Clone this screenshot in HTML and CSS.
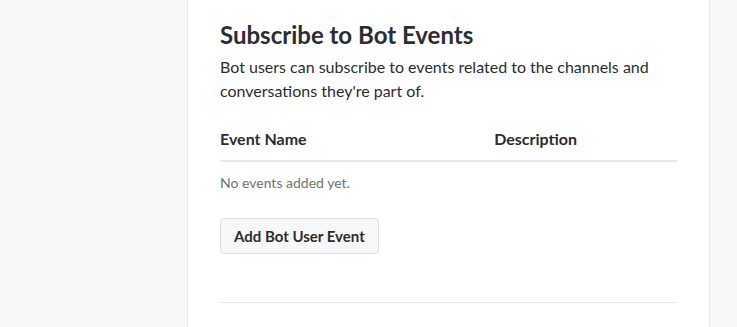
FILE: index.html
```html
<!DOCTYPE html>
<html lang="en">
<head>
    <meta charset="UTF-8">
    <title>Subscribe to Bot Events</title>
    <link rel="stylesheet" href="styles.css">
</head>
<body>
    <div class="page">
        <div class="card">
            <section class="section">
                <h2>Subscribe to Bot Events</h2>
                <p class="lead">Bot users can subscribe to events related to the channels and conversations they're part of.</p>

                <table class="events">
                    <thead>
                        <tr>
                            <th class="col-name">Event Name</th>
                            <th>Description</th>
                        </tr>
                    </thead>
                </table>
                <p class="empty">No events added yet.</p>

                <button class="btn">Add Bot User Event</button>
            </section>
            <hr class="divider">
        </div>
    </div>
</body>
</html>
```

FILE: styles.css
```css
body {
    margin: 0;
    font-family: Lato, "Open Sans", sans-serif;
    background: #f8f8f8;
    color: #2c2d30;
    height: 327px;
    overflow: hidden;
}

.page {
    display: flex;
    height: 100%;
}

.card {
    margin-left: 187px;
    background: #fff;
    border-left: 1px solid #e8e8e8;
    border-right: 1px solid #e8e8e8;
    padding: 0 32px;
    width: 457px;
}

.section {
    padding-top: 20px;
}

h2 {
    font-size: 24px;
    font-weight: 700;
    margin: 0 0 5px;
    line-height: 30px;
}

.lead {
    font-size: 16px;
    line-height: 24px;
    margin: 0 0 24px;
}

/* Events table */
.events {
    width: 100%;
    border-collapse: collapse;
}

.events th {
    text-align: left;
    font-size: 16px;
    font-weight: 700;
    padding: 2px 0 12px;
    border-bottom: 2px solid #e8e8e8;
}

.col-name {
    width: 60%;
}

.empty {
    font-size: 14px;
    color: #717274;
    margin: 12px 0 27px;
}

.btn {
    font-family: inherit;
    font-size: 15px;
    font-weight: 700;
    color: #2c2d30;
    background: #f8f8f8;
    border: 1px solid #e0e0e0;
    border-radius: 4px;
    padding: 0 13px;
    height: 36px;
    cursor: pointer;
}

.divider {
    border: 0;
    border-top: 1px solid #e8e8e8;
    margin: 48px 0 0;
}
```
